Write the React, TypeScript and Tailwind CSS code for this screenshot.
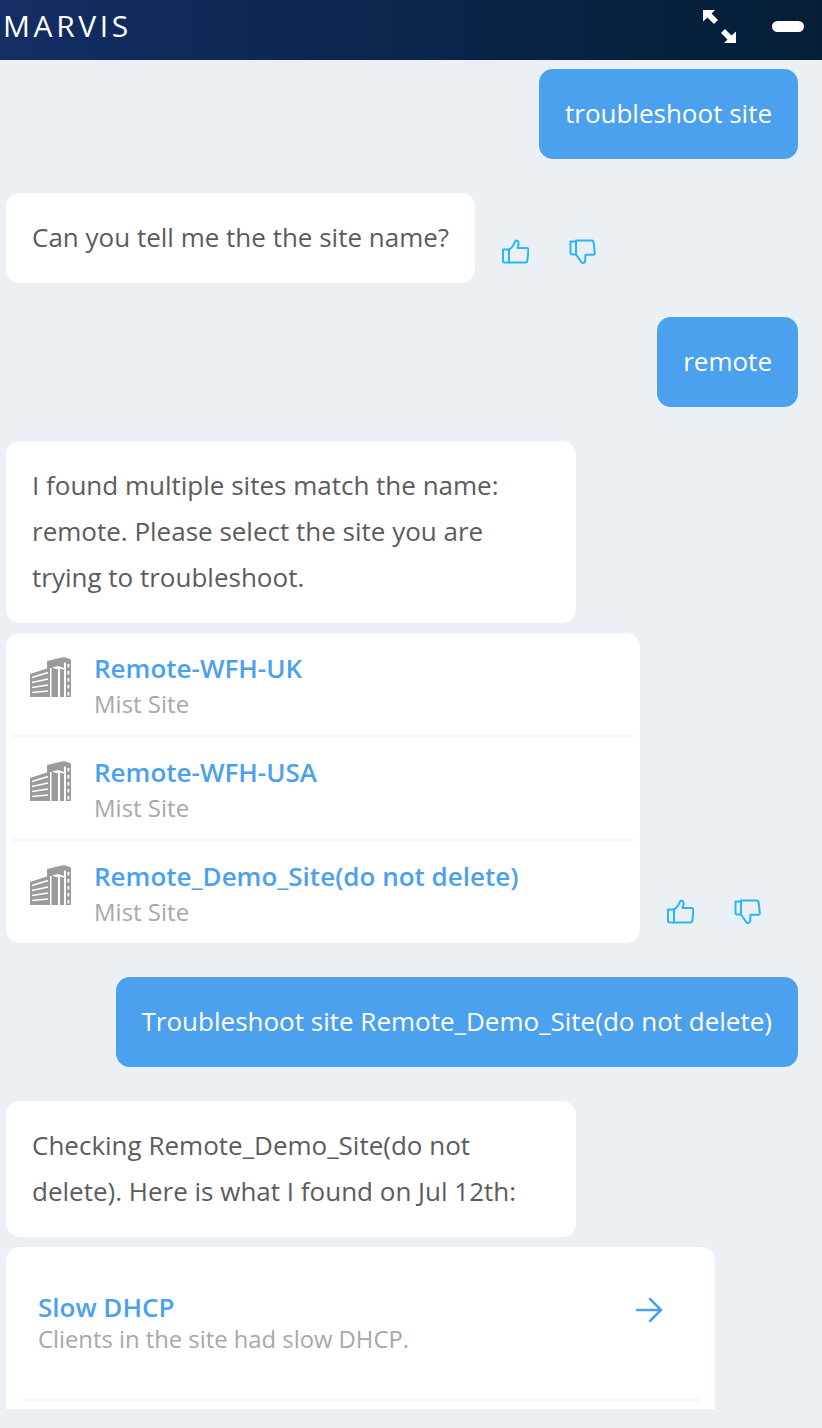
import React from 'react';

const ThumbUp = () => (
  <svg width="28" height="26" viewBox="0 0 28 26" fill="none" stroke="#29b6f6" strokeWidth="2" strokeLinejoin="round" strokeLinecap="round">
    <path d="M2 10.5h6v13H3.5A1.5 1.5 0 0 1 2 22z" />
    <path d="M8 10.5c3-1.5 4.5-4 6-8 .6-1.4 3.600-1.200 3.600 1.400 0 2-.6 3.600-1 5.100h8.900c1.300 0 2 .8 1.900 2l-1 10.500c-.1 1.200-1 2-2.200 2H8" />
  </svg>
);

const ThumbDown = () => (
  <svg width="28" height="26" viewBox="0 0 28 26" fill="none" stroke="#29b6f6" strokeWidth="2" strokeLinejoin="round" strokeLinecap="round">
    <path d="M1.500 2.500h5.500v13H3a1.500 1.500 0 0 1-1.500-1.500z" />
    <path d="M7 1.500h15.500c1.200 0 2 .7 2.100 1.800l1.200 10.500c.1 1.200-.6 2-1.800 2h-7.500l-.4 6.500c-.2 2-2.800 2.400-3.800.8L7 15.500" />
  </svg>
);

const Feedback = () => (
  <div className="flex items-center gap-[40px]">
    <ThumbUp />
    <ThumbDown />
  </div>
);

const Building = () => (
  <svg width="44" height="42" viewBox="0 0 44 42" fill="#9b9b9b" className="mt-[6px] shrink-0">
    <path d="M18 5 35 1l7 2.500V41h-5V7l-2-.7V12l-6-2-11 3z" />
    <rect x="38.500" y="8" width="1.800" height="3.500" fill="#fff" />
    <rect x="38.500" y="15" width="1.800" height="3.500" fill="#fff" />
    <rect x="38.500" y="22" width="1.800" height="3.500" fill="#fff" />
    <rect x="38.500" y="29" width="1.800" height="3.500" fill="#fff" />
    <rect x="38.500" y="36" width="1.800" height="3.500" fill="#fff" />
    <path d="M1 18l20-6.500V41H1z" />
    <path d="M22.500 11.500 29 13.500V41h-6.500z" />
    <path d="M31 12.500l4 1.300V41h-4z" />
    <path d="M3 21.500l16-5M3 26.500l16-3.500M3 31.500l16-2.500M3 36.500l16-1.500" stroke="#fff" strokeWidth="1.600" fill="none" />
  </svg>
);

const sites = [
  { name: 'Remote-WFH-UK', row: 'h-[104px] border-b-2 border-[#f2f3f4]' },
  { name: 'Remote-WFH-USA', row: 'h-[104px] border-b-2 border-[#f2f3f4]' },
  { name: 'Remote_Demo_Site(do not delete)', row: 'h-[102px]' },
];

const UserBubble = ({ text }: { text: string }) => (
  <div className="flex justify-end pr-[24px]">
    <div className="rounded-[14px] bg-[#4ba1ee] px-[26px] pb-[23px] pt-[21px] text-white">{text}</div>
  </div>
);

const BotBubble = ({ children, className }: { children: React.ReactNode; className?: string }) => (
  <div className={`rounded-[14px] bg-white px-[26px] pb-[23px] pt-[21px] text-[#5c5c5c] ${className ?? ''}`}>{children}</div>
);

export default function App() {
  return (
    <div className="flex h-[1428px] w-[822px] flex-col overflow-hidden bg-[#ebf0f5] font-['Open_Sans',sans-serif] text-[26px] leading-[46px]">
      {/* Header */}
      <div className="flex h-[60px] shrink-0 items-center justify-between bg-gradient-to-r from-[#142d64] to-[#041e35] pl-[3px] pr-[18px]">
        <span className="mb-[8px] text-[30px] font-normal tracking-[3.6px] text-white">MARVIS</span>
        <div className="flex items-center gap-[36px]">
          <svg width="33" height="33" viewBox="0 0 33 33" fill="#fff" className="mb-[8px]">
            <path d="M0 0h12l-3.500 3.500 6.500 6.500-4 4-6.500-6.500L0 11.500z" />
            <path d="M33 33H21l3.500-3.500-6.500-6.500 4-4 6.500 6.500 4.500-4z" />
          </svg>
          <div className="mb-[8px] h-[11px] w-[32px] rounded-full bg-white" />
        </div>
      </div>

      {/* Messages */}
      <div className="flex flex-col pt-[9px]">
        <UserBubble text="troubleshoot site" />

        <div className="mt-[34px] flex items-end gap-[26px] pl-[6px]">
          <BotBubble>Can you tell me the the site name?</BotBubble>
          <div className="mb-[18px]"><Feedback /></div>
        </div>

        <div className="mt-[34px]"><UserBubble text="remote" /></div>

        <div className="mt-[34px] pl-[6px]">
          <BotBubble className="w-[570px]">
            I found multiple sites match the name: remote. Please select the site you are trying to troubleshoot.
          </BotBubble>
        </div>

        <div className="mt-[10px] flex items-end gap-[26px] pl-[6px]">
          <div className="flex w-[634px] flex-col rounded-[14px] bg-white px-[7px] text-[24px]">
            {sites.map(site => (
              <div key={site.name} className={`flex items-start gap-[21px] pl-[16px] pt-[17px] ${site.row}`}>
                <Building />
                <div className="flex flex-col leading-[36px]">
                  <span className="text-[26px] font-semibold text-[#4ba1ee]">{site.name}</span>
                  <span className="text-[#a8a8a8]">Mist Site</span>
                </div>
              </div>
            ))}
          </div>
          <div className="mb-[18px]"><Feedback /></div>
        </div>

        <div className="mt-[34px]"><UserBubble text="Troubleshoot site Remote_Demo_Site(do not delete)" /></div>

        <div className="mt-[34px] pl-[6px]">
          <BotBubble className="w-[570px]">
            Checking Remote_Demo_Site(do not delete). Here is what I found on Jul 12th:
          </BotBubble>
        </div>

        <div className="ml-[6px] mt-[10px] flex h-[162px] w-[709px] flex-col rounded-t-[14px] bg-white px-[16px]">
          <div className="flex h-[154px] items-center justify-between border-b-2 border-[#f2f3f4] pl-[16px] pr-[36px]">
            <div className="mb-[1px] flex flex-col leading-[32px]">
              <span className="font-semibold text-[#4ba1ee]">Slow DHCP</span>
              <span className="text-[23.8px] text-[#a8a8a8]">Clients in the site had slow DHCP.</span>
            </div>
            <svg width="28" height="26" viewBox="0 0 28 26" fill="none" stroke="#4ba1ee" strokeWidth="2.500" strokeLinecap="round" className="mb-[26px]">
              <path d="M2 13h23M15 2l11 11-11 11" />
            </svg>
          </div>
        </div>
      </div>
    </div>
  );
}
